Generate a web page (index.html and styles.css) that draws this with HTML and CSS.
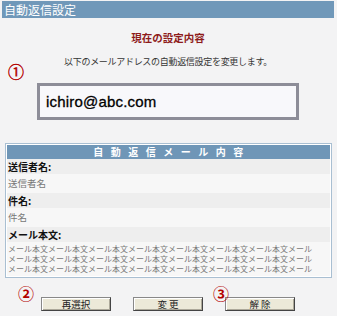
FILE: index.html
```html
<!DOCTYPE html>
<html lang="ja">
<head>
  <meta charset="UTF-8" />
  <title>自動返信設定</title>
  <link rel="stylesheet" href="styles.css">
</head>
<body>
  <div class="page">
    <div class="title-bar">自動返信設定</div>
    <div class="current-title">現在の設定内容</div>
    <div class="desc">以下のメールアドレスの自動返信設定を変更します。</div>

    <div class="mail-wrap">
      <span class="mark mark-1">①</span>
      <div class="mail-box">ichiro@abc.com</div>
    </div>

    <div class="panel">
      <div class="panel-head">自動返信メール内容</div>
      <div class="row label">送信者名:</div>
      <div class="row value">送信者名</div>
      <div class="row label">件名:</div>
      <div class="row value">件名</div>
      <div class="row label">メール本文:</div>
      <div class="row body-text">メール本文メール本文メール本文メール本文メール本文メール本文メール本文メール<br>メール本文メール本文メール本文メール本文メール本文メール本文メール本文メール<br>メール本文メール本文メール本文メール本文メール本文メール本文メール本文メール</div>
    </div>

    <div class="btn-row">
      <span class="mark mark-2">②</span>
      <span class="mark mark-3">③</span>
      <button class="btn">再選択</button>
      <button class="btn">変 更</button>
      <button class="btn">解 除</button>
    </div>
  </div>
</body>
</html>
```

FILE: styles.css
```css
* {
  box-sizing: border-box;
}
html, body {
  margin: 0;
  padding: 0;
  background: #f3f3f4;
  font-family: "Noto Sans CJK JP", "Liberation Sans", sans-serif;
  color: #333;
}
.page {
  width: 332px;
  margin-left: 2px;
  padding-top: 1px;
}
.title-bar {
  height: 17px;
  line-height: 17px;
  background: #7098b9;
  color: #fff;
  font-size: 12px;
  padding-left: 2px;
}
.current-title {
  margin-top: 13px;
  line-height: 14px;
  text-align: center;
  font-size: 10.5px;
  font-weight: bold;
  color: #8e1b1b;
}
.desc {
  margin-top: 10px;
  line-height: 14px;
  text-align: center;
  font-size: 9px;
  letter-spacing: -0.3px;
  color: #333;
}
.mail-wrap {
  position: relative;
  margin-top: 14px;
}
.mail-box {
  margin-left: 35px;
  width: 262px;
  height: 37px;
  border: 3px solid #8d8d98;
  background: #f8f8fb;
  font-family: "Liberation Sans", sans-serif;
  font-size: 15px;
  letter-spacing: 0.2px;
  color: #000;
  line-height: 31px;
  padding-left: 6px;
  -webkit-text-stroke: 0.3px #000;
}
.mark {
  position: absolute;
  font-size: 16px;
  line-height: 16px;
  color: #b30000;
}
.mark-1 {
  left: 6px;
  top: -18px;
  font-family: "Liberation Serif", "Noto Sans CJK JP", serif;
  -webkit-text-stroke: 0.4px #b30000;
}
.mark-2 {
  left: 16px;
  top: -12px;
  font-weight: bold;
}
.mark-3 {
  left: 211px;
  top: -12px;
  font-weight: bold;
}
.panel {
  margin-top: 23px;
  margin-left: 3px;
  width: 327px;
  border: 1px solid #a9bfd2;
  padding: 1px;
  background: #fff;
}
.panel-head {
  height: 14px;
  line-height: 14px;
  background: #6f96b7;
  color: #fff;
  text-align: center;
  font-size: 10px;
  font-weight: bold;
  letter-spacing: 7.5px;
  padding-left: 7px;
}
.row {
  padding-left: 1px;
  font-size: 10px;
}
.label {
  height: 15px;
  line-height: 15px;
  background: #eeeeee;
  font-weight: bold;
  color: #111;
}
.value {
  height: 19px;
  line-height: 19px;
  background: #f7f7f7;
  color: #777;
  font-size: 9.5px;
}
.body-text {
  background: #f7f7f7;
  color: #777;
  font-size: 8px;
  line-height: 10px;
  padding-top: 2px;
  padding-bottom: 2px;
  white-space: nowrap;
  overflow: hidden;
}
.btn-row {
  position: relative;
  display: flex;
  gap: 22px;
  margin-top: 19px;
  padding-left: 39px;
}
.btn {
  width: 70px;
  height: 14px;
  padding: 0;
  margin: 0;
  font-family: "Noto Sans CJK JP", sans-serif;
  font-size: 9.5px;
  line-height: 12px;
  color: #222;
  background: #ece9d8;
  border: 1px solid #444;
  border-top-color: #888;
  border-left-color: #888;
  box-shadow: inset 1px 1px #fff, inset -1px -1px #aca899;
}
```
